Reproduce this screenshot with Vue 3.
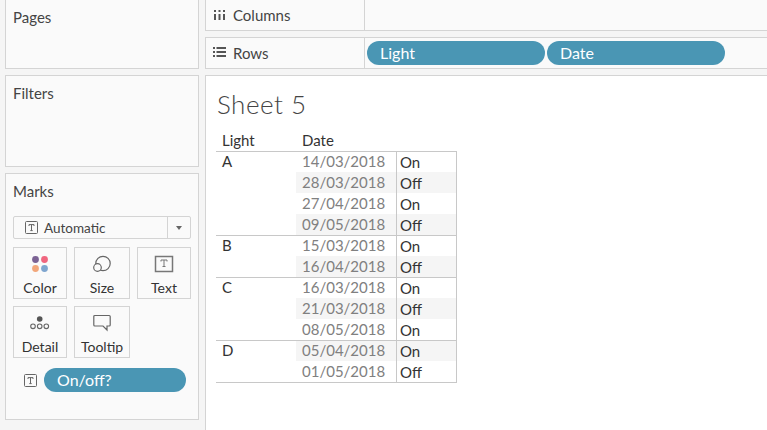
<script setup>
const groups = [
  { light: 'A', rows: [['14/03/2018', 'On'], ['28/03/2018', 'Off'], ['27/04/2018', 'On'], ['09/05/2018', 'Off']], start: 0 },
  { light: 'B', rows: [['15/03/2018', 'On'], ['16/04/2018', 'Off']], start: 0 },
  { light: 'C', rows: [['16/03/2018', 'On'], ['21/03/2018', 'Off'], ['08/05/2018', 'On']], start: 0 },
  { light: 'D', rows: [['05/04/2018', 'On'], ['01/05/2018', 'Off']], start: 1 }
]
</script>

<template>
  <div class="app">
    <aside class="side">
      <section class="card pages"><h2>Pages</h2></section>
      <section class="card filters"><h2>Filters</h2></section>
      <section class="card marks">
        <h2>Marks</h2>
        <div class="select">
          <span class="select-main">
            <svg class="t-icon" width="13" height="13" viewBox="0 0 13 13"><rect x=".5" y=".5" width="12" height="12" rx="1" fill="none" stroke="#666"/><path d="M4 5V3.6h5V5M6.5 3.6v6M5.3 9.6h2.4" fill="none" stroke="#666"/></svg>
            Automatic
          </span>
          <span class="select-arrow"><i></i></span>
        </div>
        <div class="mark-grid">
          <button class="mark">
            <svg width="22" height="22" viewBox="0 0 22 22"><circle cx="6.500" cy="6.500" r="3.400" fill="#7b6294"/><circle cx="15.500" cy="6.500" r="3.400" fill="#f0667f"/><circle cx="6.500" cy="15.500" r="3.400" fill="#f2a77b"/><circle cx="15.500" cy="15.500" r="3.400" fill="#7fa6cf"/></svg>
            <span>Color</span>
          </button>
          <button class="mark">
            <svg width="22" height="22" viewBox="0 0 22 22" fill="none" stroke="#666" stroke-width="1.200"><circle cx="12" cy="10.500" r="7.200"/><circle cx="6.500" cy="14.500" r="3.800" fill="#fafafa"/></svg>
            <span>Size</span>
          </button>
          <button class="mark">
            <svg width="22" height="22" viewBox="0 0 22 22" fill="none" stroke="#777"><rect x="2.500" y="3.500" width="17" height="15" stroke-width="1.500"/><path d="M8 8.500V7h6v1.500M11 7v6.500M9.500 13.500h3" stroke-width="1"/></svg>
            <span>Text</span>
          </button>
          <button class="mark">
            <svg width="22" height="22" viewBox="0 0 22 22"><circle cx="10.700" cy="7" r="2.800" fill="#555"/><g fill="none" stroke="#666" stroke-width="1.100"><circle cx="4" cy="14.300" r="2.300"/><circle cx="10.700" cy="14.300" r="2.300"/><circle cx="17.300" cy="14.300" r="2.300"/></g></svg>
            <span>Detail</span>
          </button>
          <button class="mark">
            <svg width="22" height="22" viewBox="0 0 22 22"><path d="M3.800 3.500H18.200a1 1 0 0 1 1 1V13a1 1 0 0 1-1 1H16v4l-4-4H3.800a1 1 0 0 1-1-1V4.500a1 1 0 0 1 1-1z" fill="none" stroke="#666" stroke-width="1.200"/></svg>
            <span>Tooltip</span>
          </button>
        </div>
        <div class="mark-pill">
          <svg width="13" height="13" viewBox="0 0 13 13"><rect x=".5" y=".5" width="12" height="12" rx="1" fill="none" stroke="#666"/><path d="M4 5V3.6h5V5M6.5 3.6v6M5.3 9.6h2.4" fill="none" stroke="#666"/></svg>
          <span class="pill wide">On/off?</span>
        </div>
      </section>
    </aside>

    <main class="main">
      <div class="shelf columns">
        <div class="shelf-label">
          <svg width="13" height="14" viewBox="0 0 13 14" fill="#555"><path d="M1 2h2v2H1zM5.500 2h2v2h-2zM10 2h2v2h-2zM1 6h2v6H1zM5.500 6h2v6h-2zM10 6h2v6h-2z"/></svg>
          <span>Columns</span>
        </div>
        <div class="shelf-body"></div>
      </div>
      <div class="shelf rows">
        <div class="shelf-label">
          <svg width="13" height="14" viewBox="0 0 13 14" fill="#555"><path d="M0 1h2v2H0zM3.500 1H13v2H3.500zM0 5h2v2H0zM3.500 5H13v2H3.500zM0 9h2v2H0zM3.500 9H13v2H3.500z"/></svg>
          <span>Rows</span>
        </div>
        <div class="shelf-body">
          <span class="pill">Light</span>
          <span class="pill">Date</span>
        </div>
      </div>
      <div class="view">
        <h1>Sheet 5</h1>
        <div class="table">
          <div class="head"><span class="h-light">Light</span><span>Date</span></div>
          <div v-for="g in groups" :key="g.light" class="group">
            <div class="light">{{ g.light }}</div>
            <div class="group-rows">
              <div v-for="(r, i) in g.rows" :key="r[0]" class="row" :class="{ band: (i + g.start) % 2 === 1, first: i === 0 }">
                <span class="date">{{ r[0] }}</span>
                <span class="val">{{ r[1] }}</span>
              </div>
            </div>
          </div>
        </div>
      </div>
    </main>
  </div>
</template>

<style>
html, body { margin: 0; background: #f5f5f5; }
</style>

<style scoped>
.app {
  width: 767px;
  height: 430px;
  overflow: hidden;
  display: flex;
  background: #f5f5f5;
  color: #333;
  font-family: Lato, "Liberation Sans", sans-serif;
  font-size: 15px;
  box-sizing: border-box;
}
.side {
  width: 194px;
  margin-left: 5px;
  display: flex;
  flex-direction: column;
  gap: 6px;
  flex: none;
}
.card {
  box-sizing: border-box;
  background: #fafafa;
  border: 1px solid #d4d4d4;
  padding: 0 7px;
}
.card h2 {
  margin: 0;
  font-size: 15px;
  font-weight: 400;
  line-height: 18px;
  color: #444;
}
.pages { height: 69px; border-top: 0; padding-top: 8px; }
.filters { height: 92px; padding-top: 8px; }
.marks { height: 247px; padding-top: 8px; }
.select {
  margin-top: 16px;
  height: 23px;
  box-sizing: border-box;
  border: 1px solid #d4d4d4;
  border-radius: 2px;
  background: #fafafa;
  display: flex;
  align-items: center;
  font-size: 13.5px;
  color: #444;
}
.select-main {
  flex: 1;
  display: flex;
  align-items: center;
  gap: 6px;
  padding-left: 11px;
}
.select-arrow {
  width: 22px;
  height: 100%;
  border-left: 1px solid #d4d4d4;
  display: flex;
  align-items: center;
  justify-content: center;
}
.select-arrow i {
  width: 0;
  height: 0;
  border-left: 3.5px solid transparent;
  border-right: 3.5px solid transparent;
  border-top: 4px solid #666;
}
.mark-grid {
  margin-top: 8px;
  display: grid;
  grid-template-columns: 54px 56px 54px;
  grid-auto-rows: 52px;
  gap: 7px;
}
.mark {
  box-sizing: border-box;
  margin: 0;
  padding: 5px 0 0;
  border: 1px solid #d4d4d4;
  background: #fafafa;
  display: flex;
  flex-direction: column;
  align-items: center;
  font: inherit;
  font-size: 14px;
  color: #333;
}
.mark span { line-height: 17px; margin-top: 4px; }
.mark-pill {
  margin-top: 10px;
  padding-left: 11px;
  display: flex;
  align-items: center;
  gap: 7px;
}
.pill {
  width: 178px;
  height: 24px;
  border-radius: 12px;
  background: #4a96b4;
  color: #fff;
  font-size: 16px;
  line-height: 24px;
  padding-left: 13px;
  box-sizing: border-box;
  display: block;
}
.pill.wide { width: 142px; }
.main {
  flex: 1;
  min-width: 0;
  margin-left: 6px;
  display: flex;
  flex-direction: column;
  gap: 6px;
}
.shelf {
  box-sizing: border-box;
  display: flex;
  background: #fafafa;
  border: 1px solid #d4d4d4;
  border-right: 0;
}
.columns { height: 31px; border-top: 0; }
.rows { height: 32px; }
.shelf-label {
  width: 159px;
  box-sizing: border-box;
  border-right: 1px solid #d4d4d4;
  display: flex;
  align-items: center;
  gap: 7px;
  padding-left: 7px;
  color: #444;
}
.shelf-body {
  flex: 1;
  display: flex;
  align-items: center;
  gap: 2px;
  padding-left: 2px;
}
.view {
  flex: 1;
  box-sizing: border-box;
  background: #fff;
  border: 1px solid #d4d4d4;
  border-right: 0;
  border-bottom: 0;
  padding-left: 10px;
}
h1 {
  margin: 0;
  padding: 12px 0 0 1px;
  font-size: 26px;
  font-weight: 300;
  line-height: 33px;
  color: #444;
  letter-spacing: .5px;
}
.table { width: 241px; margin-top: 9px; border-bottom: 1px solid #c8c8c8; }
.head {
  display: flex;
  height: 21px;
  line-height: 21px;
  color: #333;
}
.head span { display: block; }
.h-light { width: 80px; padding-left: 6px; box-sizing: border-box; }
.head span:last-child { padding-left: 6px; }
.group { display: flex; }
.light {
  width: 80px;
  flex: none;
  box-sizing: border-box;
  padding-left: 6px;
  line-height: 21px;
  box-shadow: inset 0 1px 0 #c8c8c8;
}
.group-rows { flex: 1; }
.row {
  height: 21px;
  display: flex;
  line-height: 21px;
}
.band { background: #f5f5f5; }
.row.first { box-shadow: inset 0 1px 0 #c8c8c8; }
.date {
  width: 100px;
  box-sizing: border-box;
  padding-left: 6px;
  color: #808080;
}
.val {
  flex: 1;
  box-sizing: border-box;
  border-left: 1px solid #c8c8c8;
  border-right: 1px solid #c8c8c8;
  padding: 1px 0 0 3px;
  color: #333;
}
</style>
